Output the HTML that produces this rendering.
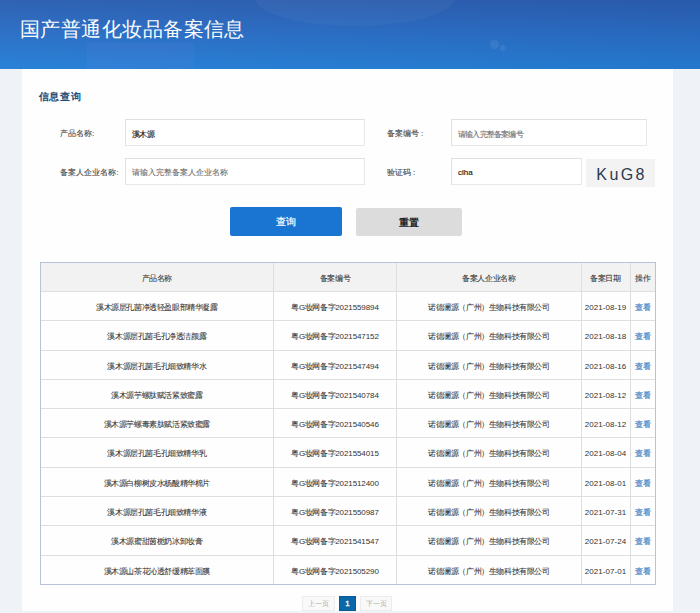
<!DOCTYPE html>
<html><head><meta charset="utf-8">
<style>
*{margin:0;padding:0;box-sizing:border-box}
html,body{width:700px;height:613px;overflow:hidden}
body{position:relative;background:#eff2f7;font-family:"Liberation Sans",sans-serif;color:#333}
.hdr{position:absolute;left:0;top:0;width:700px;height:69px;
 background:linear-gradient(180deg,#2c5fb1 0%,#2a6fc6 50%,#2580d6 100%);overflow:hidden}
.hdr .t{position:absolute;left:20px;top:16px;font-size:20px;letter-spacing:0.45px;color:#fff;line-height:26px;white-space:nowrap}
.panel{position:absolute;left:22px;top:69px;width:651px;height:542px;background:#fefefe}
.a{position:absolute;white-space:nowrap}
.lbl{font-size:8px;color:#3c3c3c;line-height:10px;-webkit-text-stroke:0.1px #555}
.inp{position:absolute;border:1px solid #e0e0e0;border-right-color:#e8e8e8;border-bottom-color:#e8e8e8;background:#fff;height:27px}
.inp span{position:absolute;left:6px;top:1px;line-height:25px;font-size:8px;white-space:nowrap}
.ph{color:#666;-webkit-text-stroke:0.08px #777}
.val{color:#111;-webkit-text-stroke:0.15px #222}
.btn{position:absolute;height:28.4px;border-radius:2px;text-align:center;line-height:29.6px;font-size:10px}
.c{position:absolute;text-align:center;white-space:nowrap;font-size:8px;letter-spacing:-0.4px;color:#2e2e2e;-webkit-text-stroke:0.08px #555}
.c .dg{letter-spacing:-0.1px;-webkit-text-stroke:0;color:#333}
.c .dt{letter-spacing:0.05px;-webkit-text-stroke:0;color:#333}
.link{color:#3d82c8;-webkit-text-stroke:0.22px #4a8acb}
.hl{position:absolute;height:1px;background:#dedede}
.vl{position:absolute;width:1px;background:#dedede}
.tb{position:absolute;border:1px solid #b9c3d7;box-sizing:content-box}
.pg{position:absolute;top:596px;height:15px;font-size:7.4px;text-align:center;line-height:14px}
</style></head><body>
<div class="hdr">
 <div style="position:absolute;left:87px;top:43px;width:107px;height:30px;background:rgba(150,140,255,0.07)"></div>
 <div style="position:absolute;left:255px;top:-30px;width:200px;height:56px;border-radius:50%;background:rgba(255,255,255,0.035)"></div>
 <div style="position:absolute;left:490px;top:40px;width:9px;height:9px;border-radius:50%;background:rgba(255,255,255,0.08)"></div>
 <div style="position:absolute;left:500px;top:45px;width:6px;height:6px;border-radius:50%;background:rgba(255,255,255,0.08)"></div>
 <div class="t">国产普通化妆品备案信息</div>
 <div style="position:absolute;left:0;top:0;width:700px;height:69px;background:linear-gradient(90deg,rgba(255,255,255,0.02),rgba(0,0,60,0.06))"></div>
</div>
<div class="panel"></div>
<div class="a" style="left:38.5px;top:91px;font-size:10px;letter-spacing:0.9px;font-weight:bold;color:#234b7a;line-height:11px">信息查询</div>
<div class="a lbl" style="left:60px;top:129px">产品名称:</div>
<div class="a lbl" style="left:60.3px;top:168px">备案人企业名称:</div>
<div class="a lbl" style="left:386.7px;top:129px">备案编号 :</div>
<div class="a lbl" style="left:386.7px;top:168px">验证码 :</div>
<div class="inp" style="left:125px;top:119px;width:239.5px"><span class="val" style="font-size:8px;letter-spacing:-0.6px;top:2px">溪木源</span></div>
<div class="inp" style="left:125px;top:158px;width:239.5px"><span class="ph">请输入完整备案人企业名称</span></div>
<div class="inp" style="left:451px;top:119px;width:196px"><span class="ph" style="font-size:8px;letter-spacing:-0.8px;top:1.5px">请输入完整备案编号</span></div>
<div class="inp" style="left:451px;top:158px;width:130.5px"><span class="val">clha</span></div>
<div class="a" style="left:586px;top:158.5px;width:69px;height:28px;background:#f3f3f3;text-align:center;line-height:32px;font-size:16px;letter-spacing:2.4px;text-indent:2.2px;color:#2a3b4f">KuG8</div>
<div class="btn" style="left:230px;top:207.3px;width:112px;background:#1a74d2;color:#fff;-webkit-text-stroke:0.2px #fff">查询</div>
<div class="btn" style="left:356px;top:207.5px;width:106.2px;background:#dcdcdc;color:#222;font-weight:bold">重置</div>
<div style="position:absolute;left:40px;top:262.3px;width:615.2px;height:29.28px;background:#f2f2f2"></div><div class="hl" style="top:291.08px;left:40px;width:615.2px"></div><div class="hl" style="top:320.36px;left:40px;width:615.2px"></div><div class="hl" style="top:349.64px;left:40px;width:615.2px"></div><div class="hl" style="top:378.92px;left:40px;width:615.2px"></div><div class="hl" style="top:408.20px;left:40px;width:615.2px"></div><div class="hl" style="top:437.48px;left:40px;width:615.2px"></div><div class="hl" style="top:466.76px;left:40px;width:615.2px"></div><div class="hl" style="top:496.04px;left:40px;width:615.2px"></div><div class="hl" style="top:525.32px;left:40px;width:615.2px"></div><div class="hl" style="top:554.60px;left:40px;width:615.2px"></div><div class="vl" style="left:273.00px;top:262.3px;height:322.08px"></div><div class="vl" style="left:396.20px;top:262.3px;height:322.08px"></div><div class="vl" style="left:580.50px;top:262.3px;height:322.08px"></div><div class="vl" style="left:629.50px;top:262.3px;height:322.08px"></div><div class="tb" style="left:39.50px;top:261.80px;width:614.20px;height:321.08px"></div>
<div class="c th" style="left:40.00px;width:233.50px;top:263.80px;height:29.28px;line-height:29.28px">产品名称</div><div class="c th" style="left:273.50px;width:123.20px;top:263.80px;height:29.28px;line-height:29.28px">备案编号</div><div class="c th" style="left:396.70px;width:184.30px;top:263.80px;height:29.28px;line-height:29.28px">备案人企业名称</div><div class="c th" style="left:581.00px;width:49.00px;top:263.80px;height:29.28px;line-height:29.28px">备案日期</div><div class="c th" style="left:630.00px;width:25.20px;top:263.80px;height:29.28px;line-height:29.28px">操作</div><div class="c td" style="left:40.00px;width:233.50px;top:293.08px;height:29.28px;line-height:29.28px">溪木源层孔菌净透轻盈眼部精华凝露</div><div class="c td" style="left:273.50px;width:123.20px;top:293.08px;height:29.28px;line-height:29.28px">粤G妆网备字<span class="dg">2021559894</span></div><div class="c td" style="left:396.70px;width:184.30px;top:293.08px;height:29.28px;line-height:29.28px">诺德澜源（广州）生物科技有限公司</div><div class="c td" style="left:581.00px;width:49.00px;top:293.08px;height:29.28px;line-height:29.28px"><span class="dt">2021-08-19</span></div><div class="c td link" style="left:630.00px;width:25.20px;top:293.08px;height:29.28px;line-height:29.28px">查看</div><div class="c td" style="left:40.00px;width:233.50px;top:322.36px;height:29.28px;line-height:29.28px">溪木源层孔菌毛孔净透洁颜露</div><div class="c td" style="left:273.50px;width:123.20px;top:322.36px;height:29.28px;line-height:29.28px">粤G妆网备字<span class="dg">2021547152</span></div><div class="c td" style="left:396.70px;width:184.30px;top:322.36px;height:29.28px;line-height:29.28px">诺德澜源（广州）生物科技有限公司</div><div class="c td" style="left:581.00px;width:49.00px;top:322.36px;height:29.28px;line-height:29.28px"><span class="dt">2021-08-18</span></div><div class="c td link" style="left:630.00px;width:25.20px;top:322.36px;height:29.28px;line-height:29.28px">查看</div><div class="c td" style="left:40.00px;width:233.50px;top:351.64px;height:29.28px;line-height:29.28px">溪木源层孔菌毛孔细致精华水</div><div class="c td" style="left:273.50px;width:123.20px;top:351.64px;height:29.28px;line-height:29.28px">粤G妆网备字<span class="dg">2021547494</span></div><div class="c td" style="left:396.70px;width:184.30px;top:351.64px;height:29.28px;line-height:29.28px">诺德澜源（广州）生物科技有限公司</div><div class="c td" style="left:581.00px;width:49.00px;top:351.64px;height:29.28px;line-height:29.28px"><span class="dt">2021-08-16</span></div><div class="c td link" style="left:630.00px;width:25.20px;top:351.64px;height:29.28px;line-height:29.28px">查看</div><div class="c td" style="left:40.00px;width:233.50px;top:380.92px;height:29.28px;line-height:29.28px">溪木源芋螺肽赋活紧致蜜露</div><div class="c td" style="left:273.50px;width:123.20px;top:380.92px;height:29.28px;line-height:29.28px">粤G妆网备字<span class="dg">2021540784</span></div><div class="c td" style="left:396.70px;width:184.30px;top:380.92px;height:29.28px;line-height:29.28px">诺德澜源（广州）生物科技有限公司</div><div class="c td" style="left:581.00px;width:49.00px;top:380.92px;height:29.28px;line-height:29.28px"><span class="dt">2021-08-12</span></div><div class="c td link" style="left:630.00px;width:25.20px;top:380.92px;height:29.28px;line-height:29.28px">查看</div><div class="c td" style="left:40.00px;width:233.50px;top:410.20px;height:29.28px;line-height:29.28px">溪木源芋螺毒素肽赋活紧致蜜露</div><div class="c td" style="left:273.50px;width:123.20px;top:410.20px;height:29.28px;line-height:29.28px">粤G妆网备字<span class="dg">2021540546</span></div><div class="c td" style="left:396.70px;width:184.30px;top:410.20px;height:29.28px;line-height:29.28px">诺德澜源（广州）生物科技有限公司</div><div class="c td" style="left:581.00px;width:49.00px;top:410.20px;height:29.28px;line-height:29.28px"><span class="dt">2021-08-12</span></div><div class="c td link" style="left:630.00px;width:25.20px;top:410.20px;height:29.28px;line-height:29.28px">查看</div><div class="c td" style="left:40.00px;width:233.50px;top:439.48px;height:29.28px;line-height:29.28px">溪木源层孔菌毛孔细致精华乳</div><div class="c td" style="left:273.50px;width:123.20px;top:439.48px;height:29.28px;line-height:29.28px">粤G妆网备字<span class="dg">2021554015</span></div><div class="c td" style="left:396.70px;width:184.30px;top:439.48px;height:29.28px;line-height:29.28px">诺德澜源（广州）生物科技有限公司</div><div class="c td" style="left:581.00px;width:49.00px;top:439.48px;height:29.28px;line-height:29.28px"><span class="dt">2021-08-04</span></div><div class="c td link" style="left:630.00px;width:25.20px;top:439.48px;height:29.28px;line-height:29.28px">查看</div><div class="c td" style="left:40.00px;width:233.50px;top:468.76px;height:29.28px;line-height:29.28px">溪木源白柳树皮水杨酸精华棉片</div><div class="c td" style="left:273.50px;width:123.20px;top:468.76px;height:29.28px;line-height:29.28px">粤G妆网备字<span class="dg">2021512400</span></div><div class="c td" style="left:396.70px;width:184.30px;top:468.76px;height:29.28px;line-height:29.28px">诺德澜源（广州）生物科技有限公司</div><div class="c td" style="left:581.00px;width:49.00px;top:468.76px;height:29.28px;line-height:29.28px"><span class="dt">2021-08-01</span></div><div class="c td link" style="left:630.00px;width:25.20px;top:468.76px;height:29.28px;line-height:29.28px">查看</div><div class="c td" style="left:40.00px;width:233.50px;top:498.04px;height:29.28px;line-height:29.28px">溪木源层孔菌毛孔细致精华液</div><div class="c td" style="left:273.50px;width:123.20px;top:498.04px;height:29.28px;line-height:29.28px">粤G妆网备字<span class="dg">2021550987</span></div><div class="c td" style="left:396.70px;width:184.30px;top:498.04px;height:29.28px;line-height:29.28px">诺德澜源（广州）生物科技有限公司</div><div class="c td" style="left:581.00px;width:49.00px;top:498.04px;height:29.28px;line-height:29.28px"><span class="dt">2021-07-31</span></div><div class="c td link" style="left:630.00px;width:25.20px;top:498.04px;height:29.28px;line-height:29.28px">查看</div><div class="c td" style="left:40.00px;width:233.50px;top:527.32px;height:29.28px;line-height:29.28px">溪木源蜜甜茵栀奶冰卸妆膏</div><div class="c td" style="left:273.50px;width:123.20px;top:527.32px;height:29.28px;line-height:29.28px">粤G妆网备字<span class="dg">2021541547</span></div><div class="c td" style="left:396.70px;width:184.30px;top:527.32px;height:29.28px;line-height:29.28px">诺德澜源（广州）生物科技有限公司</div><div class="c td" style="left:581.00px;width:49.00px;top:527.32px;height:29.28px;line-height:29.28px"><span class="dt">2021-07-24</span></div><div class="c td link" style="left:630.00px;width:25.20px;top:527.32px;height:29.28px;line-height:29.28px">查看</div><div class="c td" style="left:40.00px;width:233.50px;top:556.60px;height:29.28px;line-height:29.28px">溪木源山茶花沁透舒缓精萃面膜</div><div class="c td" style="left:273.50px;width:123.20px;top:556.60px;height:29.28px;line-height:29.28px">粤G妆网备字<span class="dg">2021505290</span></div><div class="c td" style="left:396.70px;width:184.30px;top:556.60px;height:29.28px;line-height:29.28px">诺德澜源（广州）生物科技有限公司</div><div class="c td" style="left:581.00px;width:49.00px;top:556.60px;height:29.28px;line-height:29.28px"><span class="dt">2021-07-01</span></div><div class="c td link" style="left:630.00px;width:25.20px;top:556.60px;height:29.28px;line-height:29.28px">查看</div>
<div class="pg" style="left:302.3px;width:32.4px;border:1px solid #ececec;color:#aaa;background:#f9f9f9">上一页</div>
<div class="pg" style="left:339.4px;width:16.3px;border:1px solid #0b5a94;background:#0a68a9;color:#fff;font-size:8px;-webkit-text-stroke:0.3px #fff">1</div>
<div class="pg" style="left:360.4px;width:32px;border:1px solid #ececec;color:#aaa;background:#f9f9f9">下一页</div>
</body></html>
